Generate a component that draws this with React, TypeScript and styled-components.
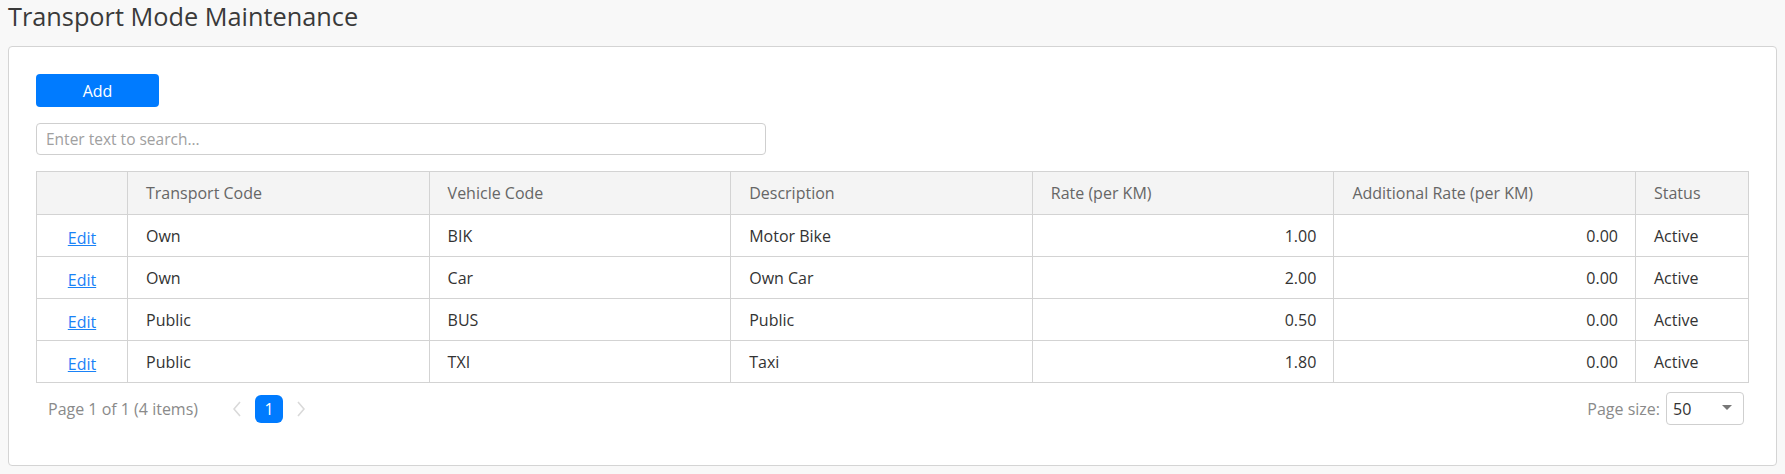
import React from "react";
import styled, { createGlobalStyle } from "styled-components";

const GlobalStyle = createGlobalStyle`
  html, body {
    margin: 0;
    padding: 0;
    background: #f8f8f8;
  }
  body {
    font-family: "Open Sans", "Noto Sans", sans-serif;
    color: #333;
  }
  * { box-sizing: border-box; }
`;

const Page = styled.div`
  padding: 0 8px;
`;

const Title = styled.h1`
  margin: 0 0 14px 0;
  font-size: 25.3px;
  line-height: 32px;
  font-weight: 400;
  color: #3a3a3a;
  white-space: nowrap;
`;

const Card = styled.div`
  background: #fff;
  border: 1px solid #d4d4d4;
  border-radius: 4px;
  padding: 27px 27px 40px 27px;
`;

const AddButton = styled.button`
  display: block;
  width: 123px;
  height: 33px;
  border: none;
  border-radius: 4px;
  background: #007bff;
  color: #fff;
  font-family: inherit;
  font-size: 16px;
  cursor: pointer;
  padding: 0;
`;

const SearchInput = styled.input`
  display: block;
  margin-top: 16px;
  width: 730px;
  height: 32px;
  border: 1px solid #cfcfcf;
  border-radius: 4px;
  padding: 0 9px;
  font-family: inherit;
  font-size: 15.5px;
  color: #333;
  outline: none;
  &::placeholder {
    color: #a0a0a0;
  }
`;

const Table = styled.table`
  margin-top: 16px;
  width: 100%;
  border-collapse: collapse;
  table-layout: fixed;
  font-size: 16px;
`;

const HeadCell = styled.th<{ $w?: number }>`
  ${(p) => (p.$w ? `width: ${p.$w}px;` : "")}
  height: 43px;
  background: #f4f4f4;
  border: 1px solid #d3d3d3;
  padding: 0 18px;
  text-align: left;
  font-weight: 400;
  color: #666;
  white-space: nowrap;
`;

const Cell = styled.td<{ $align?: "left" | "right" | "center" }>`
  height: 42px;
  border: 1px solid #d3d3d3;
  padding: 0 ${(p) => (p.$align === "right" ? "17px" : "18px")};
  text-align: ${(p) => p.$align || "left"};
  color: #333;
  white-space: nowrap;
`;

const EditLink = styled.a`
  color: #1a82f7;
  text-decoration: underline;
  cursor: pointer;
  position: relative;
  top: 2px;
`;

const Pager = styled.div`
  margin-top: 9px;
  height: 33px;
  display: flex;
  align-items: center;
  justify-content: space-between;
`;

const PagerLeft = styled.div`
  display: flex;
  align-items: center;
  padding-left: 12px;
`;

const PagerInfo = styled.span`
  font-size: 16px;
  color: #8a8a8a;
  margin-right: 35px;
`;

const Chevron = styled.span`
  display: flex;
  align-items: center;
  justify-content: center;
  width: 8px;
  height: 28px;
`;

const PageButton = styled.span`
  display: flex;
  align-items: center;
  justify-content: center;
  width: 28px;
  height: 28px;
  margin: 0 14px;
  border-radius: 6px;
  background: #007bff;
  color: #fff;
  font-size: 16px;
`;

const PagerRight = styled.div`
  display: flex;
  align-items: center;
  padding-right: 5px;
`;

const SizeLabel = styled.span`
  font-size: 16px;
  color: #8a8a8a;
  margin-right: 6px;
`;

const SizeSelect = styled.div`
  position: relative;
  width: 78px;
  height: 33px;
  border: 1px solid #cfcfcf;
  border-radius: 4px;
  display: flex;
  align-items: center;
  padding-left: 6px;
  font-size: 16px;
  color: #333;
`;

const Caret = styled.span`
  position: absolute;
  right: 11px;
  top: 12px;
  width: 0;
  height: 0;
  border-left: 5px solid transparent;
  border-right: 5px solid transparent;
  border-top: 5px solid #777;
`;

const rows = [
  { tc: "Own", vc: "BIK", desc: "Motor Bike", rate: "1.00", add: "0.00", status: "Active" },
  { tc: "Own", vc: "Car", desc: "Own Car", rate: "2.00", add: "0.00", status: "Active" },
  { tc: "Public", vc: "BUS", desc: "Public", rate: "0.50", add: "0.00", status: "Active" },
  { tc: "Public", vc: "TXI", desc: "Taxi", rate: "1.80", add: "0.00", status: "Active" },
];

const ChevronIcon = ({ dir }: { dir: "left" | "right" }) => (
  <svg width="8" height="16" viewBox="0 0 8 16">
    <polyline
      points={dir === "left" ? "7,1 1,8 7,15" : "1,1 7,8 1,15"}
      fill="none"
      stroke="#d9d9d9"
      strokeWidth="1.6"
    />
  </svg>
);

export default function App() {
  return (
    <Page>
      <GlobalStyle />
      <Title>Transport Mode Maintenance</Title>
      <Card>
        <AddButton>Add</AddButton>
        <SearchInput placeholder="Enter text to search..." />
        <Table>
          <thead>
            <tr>
              <HeadCell $w={91} />
              <HeadCell>Transport Code</HeadCell>
              <HeadCell>Vehicle Code</HeadCell>
              <HeadCell>Description</HeadCell>
              <HeadCell>Rate (per KM)</HeadCell>
              <HeadCell>Additional Rate (per KM)</HeadCell>
              <HeadCell $w={113}>Status</HeadCell>
            </tr>
          </thead>
          <tbody>
            {rows.map((r, i) => (
              <tr key={i}>
                <Cell $align="center">
                  <EditLink>Edit</EditLink>
                </Cell>
                <Cell>{r.tc}</Cell>
                <Cell>{r.vc}</Cell>
                <Cell>{r.desc}</Cell>
                <Cell $align="right">{r.rate}</Cell>
                <Cell $align="right">{r.add}</Cell>
                <Cell>{r.status}</Cell>
              </tr>
            ))}
          </tbody>
        </Table>
        <Pager>
          <PagerLeft>
            <PagerInfo>Page 1 of 1 (4 items)</PagerInfo>
            <Chevron>
              <ChevronIcon dir="left" />
            </Chevron>
            <PageButton>1</PageButton>
            <Chevron>
              <ChevronIcon dir="right" />
            </Chevron>
          </PagerLeft>
          <PagerRight>
            <SizeLabel>Page size:</SizeLabel>
            <SizeSelect>
              50
              <Caret />
            </SizeSelect>
          </PagerRight>
        </Pager>
      </Card>
    </Page>
  );
}
